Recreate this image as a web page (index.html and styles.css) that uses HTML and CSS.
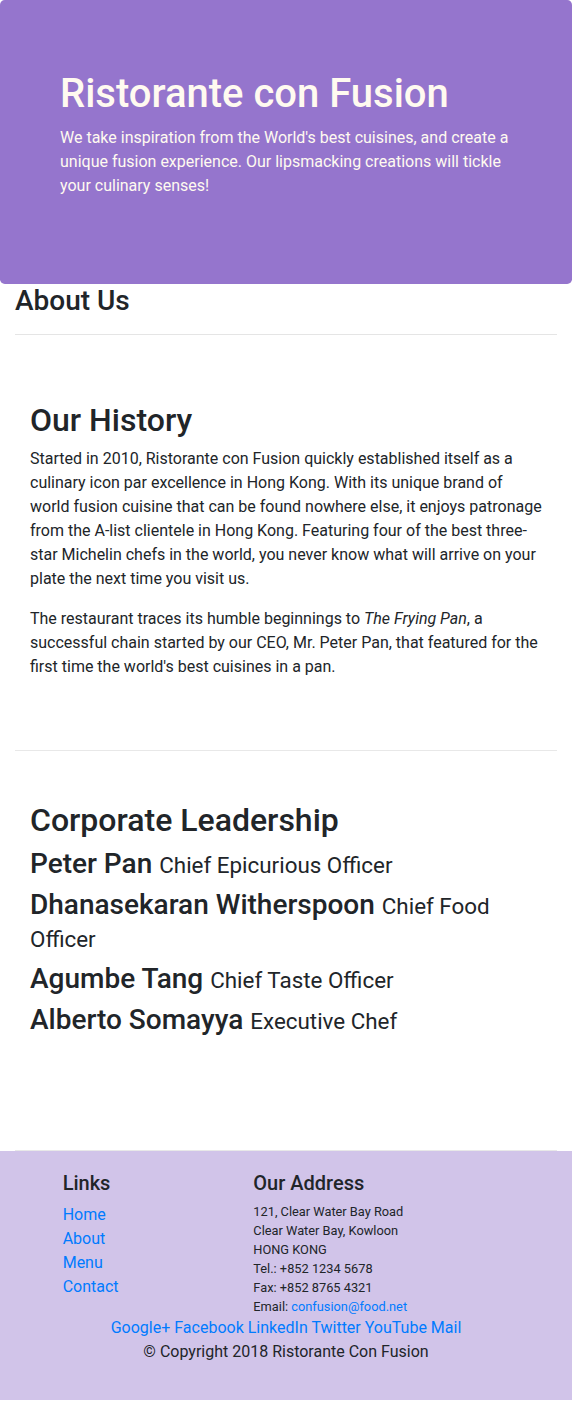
FILE: index.html
```html
<!DOCTYPE html>
<html lang="en">
<head>
<meta charset="utf-8">
<title>Ristorante con Fusion - About Us</title>
<link rel="stylesheet" href="styles.css">
</head>
<body>
<header class="jumbotron">
  <div class="jumbo-inner">
    <h1 class="jumbo-title">Ristorante con Fusion</h1>
    <p class="jumbo-text">We take inspiration from the World's best cuisines, and create a unique fusion experience. Our lipsmacking creations will tickle your culinary senses!</p>
  </div>
</header>

<main class="main">
  <div class="page-head">
    <h3 class="page-title">About Us</h3>
    <hr class="rule">
  </div>

  <section class="row-content">
    <h2 class="section-title">Our History</h2>
    <p class="para">Started in 2010, Ristorante con Fusion quickly established itself as a culinary icon par excellence in Hong Kong. With its unique brand of world fusion cuisine that can be found nowhere else, it enjoys patronage from the A-list clientele in Hong Kong. Featuring four of the best three-star Michelin chefs in the world, you never know what will arrive on your plate the next time you visit us.</p>
    <p class="para">The restaurant traces its humble beginnings to <em>The Frying Pan</em>, a successful chain started by our CEO, Mr. Peter Pan, that featured for the first time the world's best cuisines in a pan.</p>
  </section>

  <section class="row-content">
    <h2 class="section-title">Corporate Leadership</h2>
    <h3 class="leader">Peter Pan <small class="leader-role">Chief Epicurious Officer</small></h3>
    <h3 class="leader">Dhanasekaran Witherspoon <small class="leader-role">Chief Food Officer</small></h3>
    <h3 class="leader">Agumbe Tang <small class="leader-role">Chief Taste Officer</small></h3>
    <h3 class="leader">Alberto Somayya <small class="leader-role">Executive Chef</small></h3>
  </section>
</main>

<footer class="footer">
  <div class="footer-cols">
    <div class="col-links">
      <h5 class="footer-title">Links</h5>
      <ul class="link-list">
        <li><a href="#">Home</a></li>
        <li><a href="#">About</a></li>
        <li><a href="#">Menu</a></li>
        <li><a href="#">Contact</a></li>
      </ul>
    </div>
    <div class="col-address">
      <h5 class="footer-title">Our Address</h5>
      <address class="address">
        121, Clear Water Bay Road<br>
        Clear Water Bay, Kowloon<br>
        HONG KONG<br>
        Tel.: +852 1234 5678<br>
        Fax: +852 8765 4321<br>
        Email: <a href="#">confusion@food.net</a>
      </address>
    </div>
  </div>
  <div class="social">
    <a href="#">Google+</a> <a href="#">Facebook</a> <a href="#">LinkedIn</a> <a href="#">Twitter</a> <a href="#">YouTube</a> <a href="#">Mail</a>
  </div>
  <p class="copyright">© Copyright 2018 Ristorante Con Fusion</p>
</footer>
</body>
</html>
```

FILE: styles.css
```css
*, *::before, *::after { box-sizing: border-box; }

html, body {
  margin: 0;
  padding: 0;
}

body {
  font-family: Roboto, "Noto Sans", "Liberation Sans", sans-serif;
  font-size: 16px;
  line-height: 1.5;
  color: #212529;
  background: #fff;
}

a {
  color: #007bff;
  text-decoration: none;
}

/* Jumbotron */
.jumbotron {
  background: #9575CD;
  color: floralwhite;
  padding: 70px 30px;
  border-radius: 4.8px;
}

.jumbo-inner {
  padding: 0 30px;
}

.jumbo-title {
  margin: 0 0 8px;
  font-size: 40px;
  line-height: 1.2;
  font-weight: 500;
}

.jumbo-text {
  margin: 0 0 16px;
}

/* Main */
.main {
  padding: 0 15px;
}

.page-title {
  margin: 0;
  font-size: 28px;
  line-height: 1.2;
  font-weight: 500;
}

.rule {
  margin: 16px 0;
  border: 0;
  border-top: 1px solid rgba(0, 0, 0, 0.1);
  height: 0;
}

.row-content {
  padding: 50px 15px;
  min-height: 400px;
  border-bottom: 1px solid #e8e8e8;
}

.section-title {
  margin: 0 0 8px;
  font-size: 32px;
  line-height: 1.2;
  font-weight: 500;
}

.para {
  margin: 0 0 16px;
}

.leader {
  margin: 0 0 7.2px;
  font-size: 28px;
  line-height: 1.2;
  font-weight: 500;
}

.leader-role {
  font-size: 80%;
  font-weight: 400;
}

/* Footer */
.footer {
  background: #D1C4E9;
  padding: 20px 0;
}

.footer-cols {
  display: flex;
}

.col-links {
  margin-left: 8.3333%;
  width: 33.3333%;
  padding: 0 15px;
}

.col-address {
  width: 58.3333%;
  padding: 0 15px;
}

.footer-title {
  margin: 0 0 8px;
  font-size: 20px;
  line-height: 1.2;
  font-weight: 500;
}

.link-list {
  list-style: none;
  margin: 0;
  padding: 0;
}

.address {
  font-style: normal;
  font-size: 12.8px;
  line-height: 19px;
  margin: -1px 0 0;
}

.social {
  text-align: center;
  padding: 0 15px;
}

.copyright {
  text-align: center;
  margin: 0 0 16px;
  padding: 0 15px;
}
```
